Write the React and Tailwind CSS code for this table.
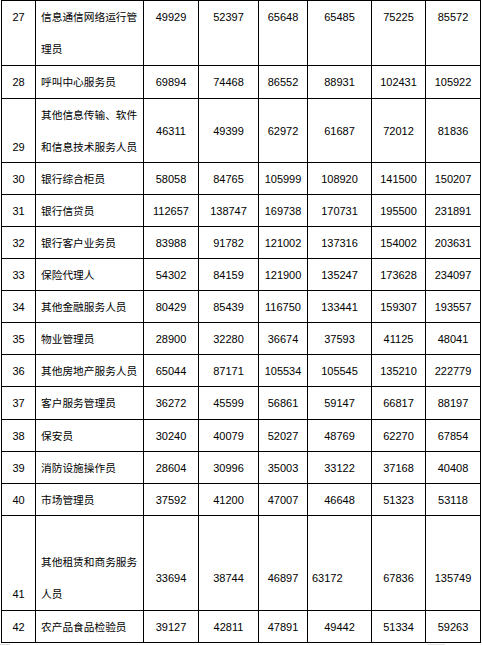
const cols = "grid grid-cols-[34px_108px_55px_60px_49px_64px_54px_55px]";

const rows = [
  { n: 27, name: ["信息通信网络运行管", "理员"], v: [49929, 52397, 65648, 65485, 75225, 85572], h: "h-[65px]", mode: "top" },
  { n: 28, name: ["呼叫中心服务员"], v: [69894, 74468, 86552, 88931, 102431, 105922], h: "h-[33px]" },
  { n: 29, name: ["其他信息传输、软件", "和信息技术服务人员"], v: [46311, 49399, 62972, 61687, 72012, 81836], h: "h-[64px]", mode: "mid" },
  { n: 30, name: ["银行综合柜员"], v: [58058, 84765, 105999, 108920, 141500, 150207], h: "h-[32px]" },
  { n: 31, name: ["银行信贷员"], v: [112657, 138747, 169738, 170731, 195500, 231891], h: "h-[32px]" },
  { n: 32, name: ["银行客户业务员"], v: [83988, 91782, 121002, 137316, 154002, 203631], h: "h-[32px]" },
  { n: 33, name: ["保险代理人"], v: [54302, 84159, 121900, 135247, 173628, 234097], h: "h-[32px]" },
  { n: 34, name: ["其他金融服务人员"], v: [80429, 85439, 116750, 133441, 159307, 193557], h: "h-[32px]" },
  { n: 35, name: ["物业管理员"], v: [28900, 32280, 36674, 37593, 41125, 48041], h: "h-[32px]" },
  { n: 36, name: ["其他房地产服务人员"], v: [65044, 87171, 105534, 105545, 135210, 222779], h: "h-[32px]" },
  { n: 37, name: ["客户服务管理员"], v: [36272, 45599, 56861, 59147, 66817, 88197], h: "h-[33px]" },
  { n: 38, name: ["保安员"], v: [30240, 40079, 52027, 48769, 62270, 67854], h: "h-[32px]" },
  { n: 39, name: ["消防设施操作员"], v: [28604, 30996, 35003, 33122, 37168, 40408], h: "h-[32px]" },
  { n: 40, name: ["市场管理员"], v: [37592, 41200, 47007, 46648, 51323, 53118], h: "h-[32px]" },
  { n: 41, name: ["其他租赁和商务服务", "人员"], v: [33694, 38744, 46897, 63172, 67836, 135749], h: "h-[95px]", mode: "low" },
  { n: 42, name: ["农产品食品检验员"], v: [39127, 42811, 47891, 49442, 51334, 59263], h: "h-[32px]" },
];

const cell = "border-r border-black flex leading-[32px]";

function Row({ r }) {
  const idxAlign = r.mode === "top" ? "items-start" : r.mode ? "items-end" : "items-center";
  const nameAlign = r.mode === "top" ? "items-start" : r.mode ? "items-end" : "items-center";
  const numAlign = r.mode === "top" ? "items-start" : r.mode === "low" ? "items-end pb-4" : "items-center";
  return (
    <div className={`${cols} ${r.h} border-b border-black`}>
      <div className={`${cell} ${idxAlign} justify-center`}>{r.n}</div>
      <div className={`${cell} ${nameAlign} pl-[5px] text-[10.7px] whitespace-nowrap`}>
        <div>
          {r.name.map((t, i) => (
            <div key={i}>{t}</div>
          ))}
        </div>
      </div>
      {r.v.map((x, i) => (
        <div
          key={i}
          className={`${cell} ${numAlign} ${r.mode === "low" && i === 3 ? "justify-start pl-[4px]" : "justify-center"}`}
        >
          {x}
        </div>
      ))}
    </div>
  );
}

export default function App() {
  return (
    <div className="w-[483px] h-[645px] bg-white overflow-hidden text-black text-[11px] font-['Liberation_Sans','Noto_Sans_CJK_SC',sans-serif]">
      <div className="ml-px w-[480px] border-l border-t border-black">
        {rows.map((r) => (
          <Row key={r.n} r={r} />
        ))}
      </div>
      <div className="flex mt-px h-[3px]">
        <div className="w-[10px] bg-[#d9d9d9]" />
        <div className="ml-[417px] w-[18px] bg-[#e3e3e3]" />
      </div>
    </div>
  );
}
